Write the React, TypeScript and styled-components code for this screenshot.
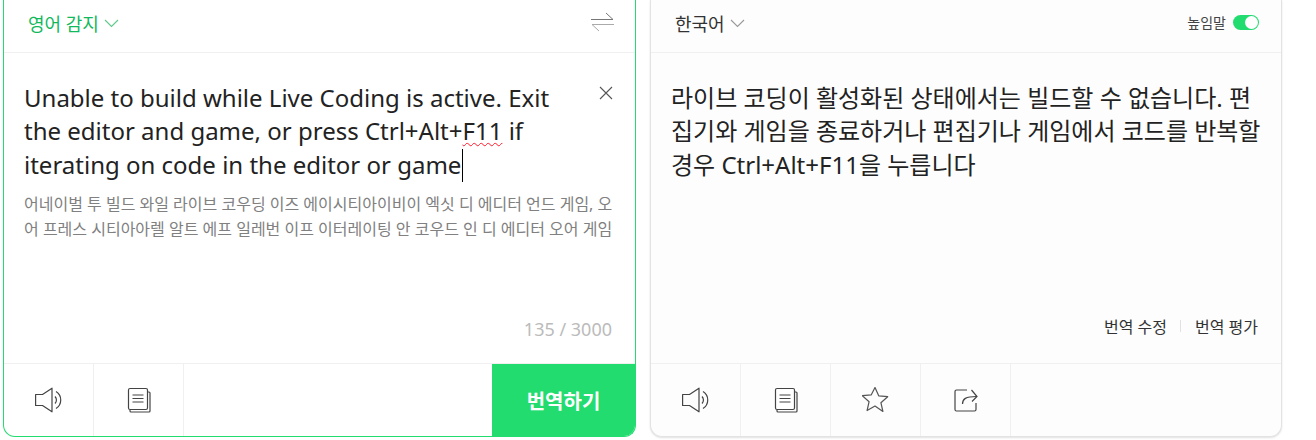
import React from "react";
import styled, { createGlobalStyle } from "styled-components";

const GlobalStyle = createGlobalStyle`
  html, body {
    margin: 0;
    padding: 0;
    background: #fff;
    font-family: "Noto Sans", "Noto Sans CJK KR", sans-serif;
  }
`;

const Page = styled.div`
  display: grid;
  grid-template-columns: 633px 632px;
  column-gap: 14px;
  width: 1316px;
  height: 440px;
  padding-left: 3px;
  box-sizing: border-box;
`;

const Panel = styled.section<{ $active?: boolean }>`
  display: flex;
  flex-direction: column;
  height: 437px;
  box-sizing: border-box;
  border-radius: 0 0 12px 12px;
  overflow: hidden;
  ${(p) =>
    p.$active
      ? "background: #fff; border: 1px solid #22dc70; border-top: 0;"
      : "background: #fdfdfd; border: 1px solid #e3e3e3; border-top: 0; box-shadow: 0 1px 2px rgba(0, 0, 0, 0.12);"}
`;

const Header = styled.header`
  display: flex;
  align-items: center;
  justify-content: space-between;
  flex: none;
  height: 53px;
  box-sizing: border-box;
  padding: 0 21px 6px 24px;
  border-bottom: 1px solid #f0f0f0;
`;

const LangButton = styled.div<{ $green?: boolean }>`
  display: flex;
  align-items: center;
  gap: 5px;
  font-size: 18px;
  color: ${(p) => (p.$green ? "#11b85c" : "#333")};
`;

const SwapIcon = styled.svg`
  margin-bottom: 3px;
`;

const Honorific = styled.div`
  display: flex;
  align-items: center;
  gap: 7px;
  margin-bottom: 2px;
  font-size: 14px;
  color: #444;
`;

const Toggle = styled.div`
  position: relative;
  width: 26px;
  height: 15px;
  margin-right: 1px;
  border-radius: 8px;
  background: #22dc70;

  &::after {
    content: "";
    position: absolute;
    top: 1px;
    right: 1px;
    width: 13px;
    height: 13px;
    border-radius: 50%;
    background: #fff;
  }
`;

const Body = styled.div`
  position: relative;
  flex: 1;
  padding: 28px 20px 0;
`;

const SourceBody = styled(Body)`
  padding-right: 70px;
`;

const MainText = styled.div`
  font-size: 24px;
  line-height: 33.4px;
  color: #222;
`;

const Misspelled = styled.span`
  text-decoration: underline wavy #ff1a28 1px;
  text-underline-offset: 2px;
`;

const Caret = styled.span`
  display: inline-block;
  width: 1px;
  height: 33px;
  margin-left: 1px;
  background: #000;
  vertical-align: -8px;
`;

const Reading = styled.div`
  margin: 10px -50px 0 0;
  font-size: 16px;
  line-height: 25px;
  color: #808080;
`;

const ClearIcon = styled.svg`
  position: absolute;
  top: 33px;
  right: 22px;
`;

const Counter = styled.div`
  position: absolute;
  right: 23px;
  bottom: 22px;
  font-size: 18px;
  color: #bbb;
`;

const Feedback = styled.div`
  position: absolute;
  right: 23px;
  bottom: 25px;
  display: flex;
  align-items: center;
  font-size: 16px;
  color: #333;
`;

const FeedbackDivider = styled.span`
  width: 1px;
  height: 12px;
  margin: 0 14px 0 13px;
  background: #e2e2e2;
`;

const Footer = styled.footer`
  display: flex;
  flex: none;
  height: 73px;
  border-top: 1px solid #f0f0f0;
  box-sizing: border-box;
`;

const IconButton = styled.div`
  display: flex;
  align-items: center;
  justify-content: center;
  width: 90px;
  border-right: 1px solid #f0f0f0;
  box-sizing: border-box;
`;

const Translate = styled.div`
  display: flex;
  align-items: center;
  justify-content: center;
  margin-left: auto;
  width: 143px;
  background: #22dc70;
  color: #fff;
  font-size: 20px;
  font-weight: 700;
`;

const Chevron = ({ color }: { color: string }) => (
  <svg width="15" height="9" viewBox="0 0 15 9" fill="none" stroke={color} strokeWidth="1.1">
    <path d="M1 1l6.5 6.5L14 1" />
  </svg>
);

const Speaker = () => (
  <svg width="28" height="26" viewBox="0 0 28 26" fill="none" stroke="#444" strokeWidth="1.2">
    <path d="M0.600 7.500h6.900L17 1.200v23.600l-9.500-6.300H0.600z" strokeLinejoin="round" />
    <path d="M20 9.500a5 5 0 0 1 0 7" />
    <path d="M21 4.500a10 10 0 0 1 0 17" />
  </svg>
);

const Copy = () => (
  <svg width="24" height="26" viewBox="0 0 24 26" fill="none" stroke="#444" strokeWidth="1.2">
    <rect x="1.500" y="1.500" width="19" height="21" rx="1.500" fill="#fff" />
    <path d="M21 5h1a1 1 0 0 1 1 1v18a1 1 0 0 1-1 1H4a1 1 0 0 1-1-1v-1" />
    <path d="M5.500 8h11M5.500 11.500h11M5.500 15h11" />
  </svg>
);

const Star = () => (
  <svg width="28" height="27" viewBox="1 1 28 27" fill="none" stroke="#555" strokeWidth="1.2">
    <path d="M14 1.500l3.700 8.300 9 .9-6.800 6 2 8.800L14 20l-7.900 4.500 2-8.800-6.800-6 9-.9z" strokeLinejoin="round" />
  </svg>
);

const Share = () => (
  <svg width="24" height="24" viewBox="0 0 24 24" fill="none" stroke="#444" strokeWidth="1.2">
    <path d="M13 2H2.500a1.500 1.500 0 0 0-1.500 1.500v18A1.500 1.500 0 0 0 2.500 23h18a1.500 1.500 0 0 0 1.500-1.500V15" />
    <path d="M8.500 16c0-5 3-7.500 14-7.500" />
    <path d="M17.500 2l5.500 6.500-5 5" />
  </svg>
);

export default function App() {
  return (
    <>
      <GlobalStyle />
      <Page>
        <Panel $active>
          <Header>
            <LangButton $green>
              영어 감지
              <Chevron color="#5cc98a" />
            </LangButton>
            <SwapIcon width="23" height="20" viewBox="0 0 23 20" fill="none" strokeWidth="1">
              <path d="M0 7.500h22L15 1" stroke="#777" />
              <path d="M23 12.500H1l7 6.500" stroke="#aaa" />
            </SwapIcon>
          </Header>
          <SourceBody>
            <MainText>
              Unable to build while Live Coding is active. Exit the editor and game, or press Ctrl+Alt+
              <Misspelled>F11</Misspelled> if iterating on code in the editor or game
              <Caret />
            </MainText>
            <Reading>
              어네이벌 투 빌드 와일 라이브 코우딩 이즈 에이시티아이비이 엑싯 디 에디터 언드 게임, 오어 프레스 시티아아렐 알트 에프 일레번 이프 이터레이팅 안 코우드 인 디 에디터 오어 게임
            </Reading>
            <ClearIcon width="14" height="14" viewBox="0 0 14 14" fill="none" stroke="#555" strokeWidth="1.1">
              <path d="M1 1l12 12M13 1L1 13" />
            </ClearIcon>
            <Counter>135 / 3000</Counter>
          </SourceBody>
          <Footer>
            <IconButton>
              <Speaker />
            </IconButton>
            <IconButton>
              <Copy />
            </IconButton>
            <Translate>번역하기</Translate>
          </Footer>
        </Panel>
        <Panel>
          <Header>
            <LangButton>
              한국어
              <Chevron color="#999" />
            </LangButton>
            <Honorific>
              높임말
              <Toggle />
            </Honorific>
          </Header>
          <Body>
            <MainText>
              라이브 코딩이 활성화된 상태에서는 빌드할 수 없습니다. 편집기와 게임을 종료하거나 편집기나 게임에서 코드를 반복할 경우 Ctrl+Alt+F11을 누릅니다
            </MainText>
            <Feedback>
              번역 수정
              <FeedbackDivider />
              번역 평가
            </Feedback>
          </Body>
          <Footer>
            <IconButton>
              <Speaker />
            </IconButton>
            <IconButton>
              <Copy />
            </IconButton>
            <IconButton>
              <Star />
            </IconButton>
            <IconButton>
              <Share />
            </IconButton>
          </Footer>
        </Panel>
      </Page>
    </>
  );
}
